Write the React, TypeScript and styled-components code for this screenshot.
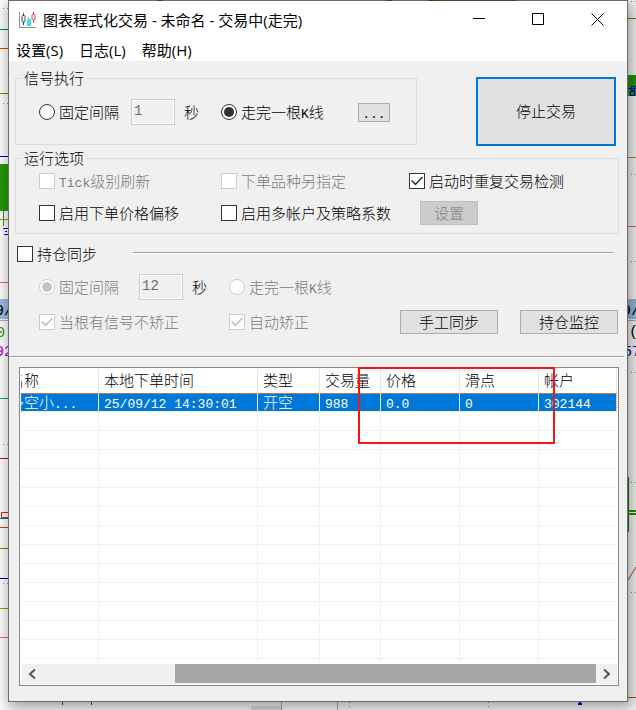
import React from "react";
import styled, { createGlobalStyle, css } from "styled-components";

const GlobalStyle = createGlobalStyle`
  * { box-sizing: border-box; }
  body { margin: 0; background: #fff; }
  body, button, input, table {
    font-family: "Noto Sans CJK SC", sans-serif;
    font-size: 15px;
    font-weight: 300;
    line-height: 18px;
    color: #000;
  }
`;

const Desktop = styled.div`
  display: grid;
  grid-template-columns: 8px minmax(0, 1fr) 8px;
  grid-template-rows: 1fr 8px;
  min-height: 100vh;
`;

const Gutter = styled.div`
  position: relative;
  overflow: hidden;
  svg { position: absolute; top: 0; left: 0; width: 100%; height: 100%; }
`;

const BottomGutter = styled(Gutter)`
  grid-column: 1 / -1;
`;

const Window = styled.main`
  z-index: 1;
  display: flex;
  flex-direction: column;
  background: #f0f0f0;
  border: 1px solid #6b6b6b;
  border-top: 0;
  box-shadow: 3px 4px 14px 3px rgba(0, 0, 0, 0.36);
`;

const TopEdge = styled.div`
  height: 1px;
  background: linear-gradient(
    90deg,
    #6b6b6b 24%, #7a2040 24% 25%, #6b6b6b 25% 61%, #7a2040 61% 62%, #6b6b6b 62% 68%,
    #801820 68% 69%, #2c5a20 69% 72%, #444 72% 82%, #6b6b6b 82%
  );
`;

const TitleBar = styled.header`
  display: flex;
  height: 37px;
  background: #fff;
  padding-left: 10px;
  align-items: center;
  gap: 6px;
`;

const Title = styled.h1`
  flex: 1;
  margin: 0;
  font: 400 15px/20px "Open Sans", "Noto Sans CJK SC", sans-serif;
  white-space: nowrap;
`;

const CaptionButton = styled.button`
  display: grid;
  place-items: center;
  width: 59px;
  height: 37px;
  padding: 0;
  border: 0;
  background: transparent;
`;

const Captions = styled.div`
  display: flex;
`;

const MenuBar = styled.nav`
  display: flex;
  gap: 16px;
  height: 23px;
  padding: 0 7px;
  background: #fff;
`;

const MenuItem = styled.button`
  padding: 0;
  border: 0;
  background: transparent;
  font: 400 15px/22px "Open Sans", "Noto Sans CJK SC", sans-serif;
`;

const Panel = styled.div`
  display: flex;
  flex-direction: column;
  flex: 1;
  padding-top: 8px;
`;

const TopRow = styled.div`
  display: flex;
  align-items: flex-start;
  gap: 59px;
  margin: 0 11px 3px 6px;
`;

const Group = styled.fieldset<{ $pad: string }>`
  flex: 1;
  min-width: 0;
  margin: 0;
  padding: ${(p) => p.$pad};
  border: 1px solid #dcdcdc;
`;

const OptionsGroup = styled(Group)`
  flex: none;
  margin: 0 8px 0 6px;
`;

const Legend = styled.legend`
  margin-left: -17px;
  padding: 0 3px 0 2px;
`;

const Row = styled.div<{ $cols: string; $height: number; $top?: number }>`
  display: grid;
  grid-template-columns: ${(p) => p.$cols};
  align-items: center;
  height: ${(p) => p.$height}px;
  margin-top: ${(p) => p.$top ?? 0}px;
`;

const SyncRow = styled(Row)`
  padding: 0 9px 0 30px;
`;

const Inline = styled.div<{ $gap: number; $end?: boolean }>`
  display: flex;
  align-items: center;
  gap: ${(p) => p.$gap}px;
  justify-content: ${(p) => (p.$end ? "flex-end" : "flex-start")};
`;

const Interval = styled.div<{ $lead: number }>`
  display: flex;
  align-items: center;
  gap: 9px;
  padding-left: ${(p) => p.$lead}px;
`;

const Field = styled.label<{ $off?: boolean }>`
  display: inline-flex;
  align-items: center;
  gap: 4px;
  white-space: nowrap;
  color: ${(p) => (p.$off ? "#7c7c7c" : "#000")};
`;

const toggle = css`
  appearance: none;
  display: grid;
  place-items: center;
  flex: none;
  width: 16px;
  height: 16px;
  margin: 0;
  border: 1px solid #333;
  background: #fff;
  &:disabled { border-color: #ccc; }
`;

const CheckInput = styled.input.attrs({ type: "checkbox" })`
  ${toggle}
  &:checked::before {
    content: "";
    width: 12px;
    height: 10px;
    background: #333;
    clip-path: polygon(0 50%, 9% 40%, 38% 72%, 91% 6%, 100% 16%, 38% 94%);
  }
  &:checked:disabled::before { background: #bdbdbd; }
`;

const RadioInput = styled.input.attrs({ type: "radio" })`
  ${toggle}
  border-radius: 50%;
  &:checked::before {
    content: "";
    width: 10px;
    height: 10px;
    border-radius: 50%;
    background: #333;
  }
  &:checked:disabled::before { background: #c4c4c4; }
`;

const NumberBox = styled.input`
  width: 44px;
  height: 26px;
  padding: 0 2px 3px;
  border: 1px solid #ccc;
  box-shadow: inset 0 0 0 1px #fff;
  background: #f0f0f0;
  color: #6d6d6d;
  font-family: "Liberation Mono", monospace;
  font-size: 14px;
`;

const Button = styled.button<{ $width: number; $height?: number }>`
  width: ${(p) => p.$width}px;
  height: ${(p) => p.$height ?? 24}px;
  padding: 0 0 1px;
  border: 1px solid #adadad;
  background: #e1e1e1;
  white-space: nowrap;
  &:disabled {
    border-color: #bfbfbf;
    background: #ccc;
    color: #838383;
  }
`;

const MoreButton = styled(Button)`
  padding: 0;
  line-height: 14px;
`;

const StopButton = styled(Button)`
  margin-top: 8px;
  border: 2px solid #0078d7;
`;

const SectionHead = styled.div`
  display: flex;
  align-items: center;
  gap: 36px;
  height: 16px;
  margin: 12px 13px 0 8px;
`;

const Rule = styled.hr`
  flex: 1;
  height: 2px;
  margin: 0 0 2px;
  border: 0;
  border-top: 1px solid #a0a0a0;
  border-bottom: 1px solid #fff;
`;

const Divider = styled(Rule)`
  flex: none;
  margin: 22px 3px 9px 0;
`;

const ListBox = styled.section`
  position: relative;
  display: flex;
  flex: 1;
  flex-direction: column;
  margin: 0 8px 15px 10px;
  padding: 1px;
  border: 1px solid #828790;
  background: #fff;
`;

const Viewport = styled.div`
  flex: 1;
  display: flex;
  flex-direction: column;
  overflow: hidden;
  margin-bottom: 2px;
`;

const Table = styled.table`
  flex: 1;
  width: 100%;
  table-layout: fixed;
  border-collapse: separate;
  border-spacing: 0;
`;

const Col = styled.col<{ $width?: number }>`
  width: ${(p) => (p.$width ? `${p.$width}px` : "auto")};
`;

const HeadCell = styled.th`
  height: 24px;
  padding: 0 0 2px 5px;
  border-right: 1px solid #e5e5e5;
  overflow: hidden;
  font-weight: 300;
  text-align: left;
  white-space: nowrap;
  &:first-child { padding-left: 3px; text-indent: -15px; }
`;

const BodyRow = styled.tr<{ $selected?: boolean }>`
  ${(p) =>
    p.$selected &&
    css`
      color: #fff;
      td { background: #0078d7; background-clip: padding-box; box-shadow: inset 0 1px 0 #b07a54; }
      td:last-child { border-right: 1px dotted #ff8728; }
    `}
`;

const Cell = styled.td`
  height: 19px;
  padding: 0 0 0 5px;
  border-right: 1px solid #f0f0f0;
  border-bottom: 1px solid #f0f0f0;
  overflow: hidden;
  line-height: 18px;
  white-space: nowrap;
  &:first-child { padding-left: 3px; text-indent: -15px; }
  &:last-child { border-right-color: transparent; }
`;

const TailCell = styled(Cell)`
  height: auto;
  border-bottom: 0;
`;

const ScrollBar = styled.div`
  display: flex;
  height: 20px;
  padding-bottom: 1px;
  background: #f0f0f0;
`;

const ScrollArrow = styled.button`
  display: grid;
  place-items: center;
  width: 21px;
  padding: 0;
  border: 0;
  background: transparent;
`;

const Track = styled.div`
  flex: 1;
  display: flex;
  justify-content: flex-end;
`;

const Thumb = styled.div`
  width: 76%;
  background: #a6a6a6;
`;

const Highlight = styled.div`
  position: absolute;
  top: -1px;
  left: 338px;
  width: 197px;
  height: 77px;
  border: 2px solid #f81414;
  pointer-events: none;
`;

const Latin = styled.span`
  font-family: "Liberation Mono", monospace;
  font-size: 13px;
  line-height: 0;
`;

/** Sets runs of half-width characters in the monospace face. */
function Mixed({ text }: { text: string }) {
  return (
    <span>
      {text.split(/([\x20-\x7e]+)/).map((part, i) =>
        i % 2 ? <Latin key={i}>{part}</Latin> : part
      )}
    </span>
  );
}

type ToggleProps = { text: string; checked?: boolean; disabled?: boolean; name?: string };

function Check({ text, checked, disabled }: ToggleProps) {
  return (
    <Field $off={disabled}>
      <CheckInput defaultChecked={checked} disabled={disabled} />
      <Mixed text={text} />
    </Field>
  );
}

function Radio({ text, checked, disabled, name }: ToggleProps) {
  return (
    <Field $off={disabled}>
      <RadioInput name={name} defaultChecked={checked} disabled={disabled} />
      <Mixed text={text} />
    </Field>
  );
}

type Line = [number, string];

function ChartLines({ lines, dots }: { lines: Line[]; dots: number[] }) {
  return (
    <>
      {lines.map(([y, color]) => (
        <rect key={y} y={y} width="8" height="1" fill={color} />
      ))}
      {dots.map((y) => (
        <path key={y} d={`M3 ${y}.5h1M7 ${y}.5h1`} stroke="#999" />
      ))}
    </>
  );
}

const LEFT_LINES: Line[] = [
  [29, "#008050"], [48, "#c05000"], [93, "#808000"], [156, "#000090"], [219, "#b89000"],
  [282, "#f050b0"], [320, "#aaa"], [398, "#00a0a0"], [458, "#b00078"], [518, "#008050"],
  [527, "#b85000"], [548, "#808000"], [578, "#000080"], [608, "#b89000"], [637, "#f050b0"],
];

const RIGHT_LINES: Line[] = [
  [18, "#808000"], [157, "#b89000"], [226, "#f050b0"], [320, "#aaa"], [697, "#e04010"],
];

function LeftChart() {
  return (
    <svg aria-hidden="true" fontFamily="Liberation Mono, monospace" fontSize="15">
      <rect y="164" width="8" height="47" fill="#289808" />
      <path d="M3.5 211v15" stroke="#289808" />
      <path d="M3 228.5h5M5 231.5h2M4 234.5h4" stroke="#0000e0" />
      <rect y="299" width="8" height="20" fill="#9dbfe6" />
      <ChartLines lines={LEFT_LINES} dots={[8, 103, 444, 583]} />
      <text x="-5" y="315">9/</text>
      <text x="-4" y="337" fill="#289808">0</text>
      <text x="-5" y="356" fill="#b000e0">92</text>
      <path d="M8 512.5H1.5v5H8" fill="none" stroke="#e02020" />
    </svg>
  );
}

function RightChart() {
  return (
    <svg aria-hidden="true" fontFamily="Liberation Mono, monospace" fontSize="15">
      <rect y="75" width="8" height="21" fill="#289808" />
      <path d="M0 88.5h8M3.5 86.5h3v4h-3zM2.5 91.5h4v4h-4z" fill="none" stroke="#0000e0" />
      <rect y="299" width="8" height="20" fill="#9dbfe6" />
      <ChartLines lines={RIGHT_LINES} dots={[1, 174, 261, 372, 482, 592]} />
      <text x="-6" y="315">9/</text>
      <text x="1" y="336">(</text>
      <text x="-5" y="356" fill="#0000a0">57</text>
      <path d="M0.5 477v55" stroke="#207010" />
      <path d="M0 511h8M0 514h8" stroke="#289808" strokeWidth="2" />
      <path d="M0 580L8 567" stroke="#b04800" />
    </svg>
  );
}

function BottomChart() {
  return (
    <svg aria-hidden="true">
      <path d="M62.5 0v3M91.5 0v3" stroke="#b00078" />
      <rect x="251" y="4" width="30" height="4" fill="#ddd" />
      <path d="M281.5 0v8M337.5 0v8" stroke="#aaa" />
      <path d="M349.5 0v1M349.5 4v1M488.5 0v1M488.5 4v1" stroke="#888" />
      <path d="M579 0h2v1h1v2h-4V1h1z" fill="#0000e0" />
    </svg>
  );
}

function AppIcon() {
  return (
    <svg width="18" height="18" viewBox="0 0 18 18" fill="none" aria-hidden="true">
      <path d="M0.5 1v15.5H17" stroke="#8c8c8c" />
      <path d="M4.5 2v2M4.5 11v3" stroke="#444" />
      <rect x="3" y="4.5" width="3" height="6.5" rx="1" stroke="#444" />
      <path d="M9.5 6v3" stroke="#40d8e0" />
      <rect x="8" y="8" width="4" height="7" fill="#38e0e8" />
      <path d="M14.5 1v2M14.5 9v3" stroke="#d04050" />
      <rect x="13" y="3.5" width="3" height="5.5" rx="1" stroke="#d04050" />
    </svg>
  );
}

const HEADERS = ["名称", "本地下单时间", "类型", "交易量", "价格", "滑点", "帐户"];
const ORDER = ["多空小...", "25/09/12 14:30:01", "开空", "988", "0.0", "0", "302144"];
const WIDTHS = [78, 159, 62, 61, 79, 79, undefined];
const EMPTY_ROWS = 13;

export default function App() {
  return (
    <>
      <GlobalStyle />
      <Desktop>
        <Gutter><LeftChart /></Gutter>
        <Window>
          <TopEdge />
          <TitleBar>
            <AppIcon />
            <Title>图表程式化交易 - 未命名 - 交易中(走完)</Title>
            <Captions>
              <CaptionButton aria-label="最小化">
                <svg width="13" height="13"><path d="M0 5.5h12" stroke="#000" /></svg>
              </CaptionButton>
              <CaptionButton aria-label="最大化">
                <svg width="13" height="13"><path d="M0.5 0.5h11v11h-11z" fill="none" stroke="#000" /></svg>
              </CaptionButton>
              <CaptionButton aria-label="关闭">
                <svg width="13" height="13"><path d="M0.5 0.5l12 12M12.5 0.5l-12 12" stroke="#000" /></svg>
              </CaptionButton>
            </Captions>
          </TitleBar>
          <MenuBar>
            <MenuItem>设置(S)</MenuItem>
            <MenuItem>日志(L)</MenuItem>
            <MenuItem>帮助(H)</MenuItem>
          </MenuBar>
          <Panel>
            <TopRow>
              <Group $pad="12px 0 19px 23px">
                <Legend>信号执行</Legend>
                <Row $cols="182px 1fr" $height={26}>
                  <Inline $gap={9}>
                    <Radio name="signal" text="固定间隔" />
                    <Interval $lead={3}>
                      <NumberBox aria-label="固定间隔秒数" defaultValue="1" disabled />
                      <span>秒</span>
                    </Interval>
                  </Inline>
                  <Inline $gap={34}>
                    <Radio name="signal" text="走完一根K线" checked />
                    <MoreButton $width={32} $height={19}><Latin>...</Latin></MoreButton>
                  </Inline>
                </Row>
              </Group>
              <StopButton $width={140} $height={69}>停止交易</StopButton>
            </TopRow>
            <OptionsGroup $pad="2px 0 8px 23px">
              <Legend>运行选项</Legend>
              <Row $cols="182px 188px 1fr" $height={24}>
                <Check text="Tick级别刷新" disabled />
                <Check text="下单品种另指定" disabled />
                <Check text="启动时重复交易检测" checked />
              </Row>
              <Row $cols="182px 199px 1fr" $height={24} $top={8}>
                <Check text="启用下单价格偏移" />
                <Check text="启用多帐户及策略系数" />
                <Button $width={58} disabled>设置</Button>
              </Row>
            </OptionsGroup>
            <SectionHead>
              <Check text="持仓同步" />
              <Rule />
            </SectionHead>
            <SyncRow $cols="190px 1fr" $height={26} $top={12}>
              <Inline $gap={9}>
                <Radio name="sync" text="固定间隔" checked disabled />
                <Interval $lead={11}>
                  <NumberBox aria-label="同步间隔秒数" defaultValue="12" disabled />
                  <span>秒</span>
                </Interval>
              </Inline>
              <Radio name="sync" text="走完一根K线" disabled />
            </SyncRow>
            <SyncRow $cols="190px auto 1fr" $height={24} $top={10}>
              <Check text="当根有信号不矫正" checked disabled />
              <Check text="自动矫正" checked disabled />
              <Inline $gap={22} $end>
                <Button $width={98}>手工同步</Button>
                <Button $width={98}>持仓监控</Button>
              </Inline>
            </SyncRow>
            <Divider />
            <ListBox>
              <Viewport>
                <Table>
                  <colgroup>
                    {WIDTHS.map((w, i) => <Col key={i} $width={w} />)}
                  </colgroup>
                  <thead>
                    <tr>{HEADERS.map((h) => <HeadCell key={h} scope="col">{h}</HeadCell>)}</tr>
                  </thead>
                  <tbody>
                    <BodyRow $selected>
                      {ORDER.map((v, i) => <Cell key={i}><Mixed text={v} /></Cell>)}
                    </BodyRow>
                    {Array.from({ length: EMPTY_ROWS }, (_, r) => (
                      <BodyRow key={r}>{HEADERS.map((h) => <Cell key={h} />)}</BodyRow>
                    ))}
                    <tr>{HEADERS.map((h) => <TailCell key={h} />)}</tr>
                  </tbody>
                </Table>
              </Viewport>
              <ScrollBar>
                <ScrollArrow aria-label="向左滚动">
                  <svg width="8" height="10"><path d="M7 0.5L2 5l5 4.5" fill="none" stroke="#555" strokeWidth="2" /></svg>
                </ScrollArrow>
                <Track><Thumb /></Track>
                <ScrollArrow aria-label="向右滚动">
                  <svg width="8" height="10"><path d="M1 0.5L6 5l-5 4.5" fill="none" stroke="#555" strokeWidth="2" /></svg>
                </ScrollArrow>
              </ScrollBar>
              <Highlight />
            </ListBox>
          </Panel>
        </Window>
        <Gutter><RightChart /></Gutter>
        <BottomGutter><BottomChart /></BottomGutter>
      </Desktop>
    </>
  );
}
